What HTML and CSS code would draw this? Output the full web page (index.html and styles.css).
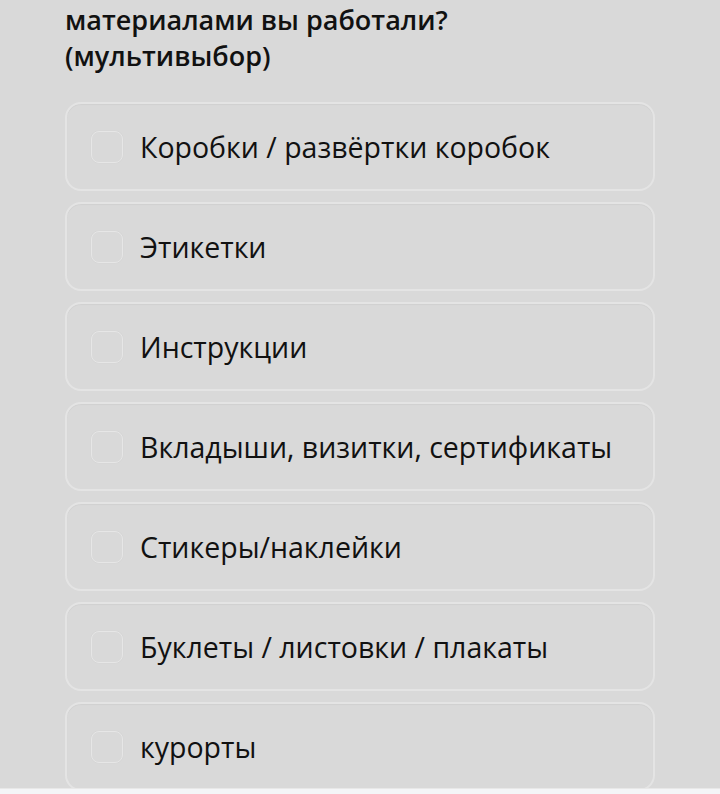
FILE: index.html
```html
<!DOCTYPE html>
<html lang="ru">
<head>
  <meta charset="UTF-8">
  <meta name="viewport" content="width=device-width, initial-scale=1.0">
  <title>Опрос</title>
  <link rel="stylesheet" href="styles.css">
</head>
<body>
  <div class="vopros">
    <h2 class="vopros-zagolovok">материалами вы работали?<br>(мультивыбор)</h2>

    <div class="varianty">
      <label class="variant"><span class="galka"></span><span class="tekst">Коробки / развёртки коробок</span></label>
      <label class="variant"><span class="galka"></span><span class="tekst">Этикетки</span></label>
      <label class="variant"><span class="galka"></span><span class="tekst">Инструкции</span></label>
      <label class="variant"><span class="galka"></span><span class="tekst">Вкладыши, визитки, сертификаты</span></label>
      <label class="variant"><span class="galka"></span><span class="tekst">Стикеры/наклейки</span></label>
      <label class="variant"><span class="galka"></span><span class="tekst">Буклеты / листовки / плакаты</span></label>
      <label class="variant"><span class="galka"></span><span class="tekst">курорты</span></label>
    </div>
  </div>

  <div class="niz"></div>
</body>
</html>
```

FILE: styles.css
```css
body {
  margin: 0;
  background: #d9d9d9;
  font-family: "Open Sans", "Noto Sans", Arial, sans-serif;
  color: #111;
  overflow: hidden;
}
.vopros {
  width: 590px;
  padding-left: 65px;
}
.vopros-zagolovok {
  margin: 0;
  padding-top: 2px;
  font-size: 27px;
  font-weight: 600;
  line-height: 36px;
}
.varianty {
  display: flex;
  flex-direction: column;
  gap: 11px;
  margin-top: 28px;
}
.variant {
  display: flex;
  align-items: center;
  gap: 17px;
  height: 85px;
  padding: 0 24px;
  border: 2px solid #e4e4e4;
  border-radius: 16px;
  box-shadow: inset 0 1px 1px rgba(0,0,0,0.04);
}
.galka {
  width: 30px;
  height: 30px;
  flex: none;
  border: 1px solid #e6e6e6;
  border-radius: 8px;
  box-shadow: 0 0 1px rgba(0,0,0,0.08);
}
.tekst {
  font-size: 28.5px;
}
.niz {
  position: fixed;
  left: 0;
  right: 0;
  bottom: 0;
  height: 5px;
  background: #f4f5f7;
  border-top: 1px solid #e8e8e8;
}
```
